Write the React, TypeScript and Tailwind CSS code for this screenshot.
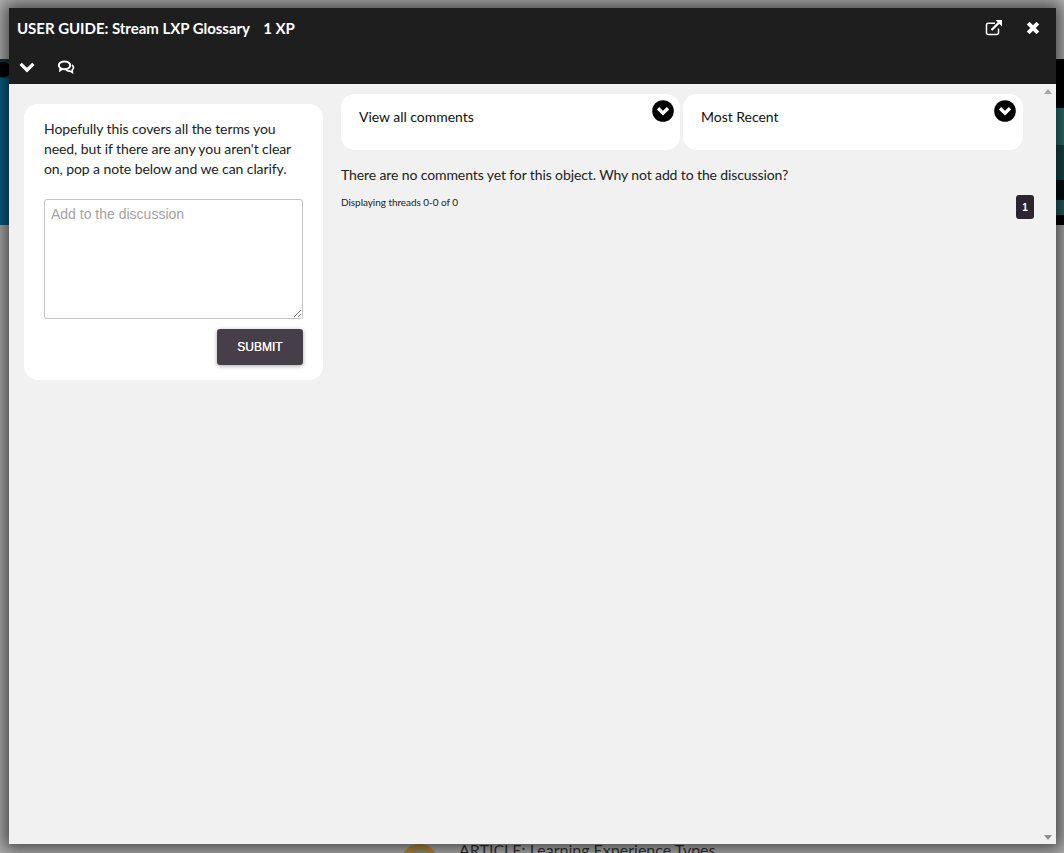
function ChevronCircle() {
  return (
    <svg viewBox="0 0 22 22" className="w-[22px] h-[22px]">
      <circle cx="11" cy="11" r="10.8" fill="#000" />
      <path d="M4.800 9.400 L7.200 7 L11 10.800 L14.800 7 L17.200 9.400 L11 15.600 Z" fill="#fff" />
    </svg>
  )
}

function SelectBox({ label, className, iconPad }: { label: string; className: string; iconPad: string }) {
  return (
    <div className={`h-14 bg-white rounded-[14px] flex justify-between ${className}`}>
      <span className="text-sm tracking-[-0.03px] text-[#111] pl-[18px] pt-[14px] leading-[18px]">{label}</span>
      <span className={`pt-1.5 ${iconPad}`}><ChevronCircle /></span>
    </div>
  )
}

export default function App() {
  return (
    <div className="relative w-full h-[853px] overflow-hidden bg-[#b0b0b0] font-['Lato',sans-serif]">
      {/* page behind the modal */}
      <div className="absolute inset-x-0 top-0 h-[59px] bg-[#b4b4b4]" />
      <div className="absolute inset-x-0 top-[59px] h-[166px] bg-[#0a5f8a] flex justify-between">
        <div className="w-[9px] h-[19px] bg-[#0c3b44] overflow-hidden">
          <div className="w-[15px] h-[15px] ml-[-4px] mt-[3px] rounded-full bg-black" />
        </div>
        <div className="w-2 h-full flex flex-col bg-black">
          <div className="h-[49px] bg-black" />
          <div className="h-[37px] bg-[#2a7373]" />
          <div className="h-[35px] bg-[#12484a]" />
          <div className="h-5 bg-[#020f10]" />
          <div className="h-[15px] bg-[#245f60]" />
        </div>
      </div>
      <div className="absolute left-[401px] top-[844px] w-[37px] h-[37px] rounded-full border-[6px] border-[#b98a3a] bg-[#7d9a96] flex justify-center" />
      <div className="absolute left-[459px] top-[840px] text-base text-[#333] leading-5">ARTICLE: Learning Experience Types</div>

      <div className="absolute left-[9px] top-2 w-[1047px] h-[836px] flex flex-col bg-[#f1f1f1] shadow-[0_0_16px_5px_rgba(0,0,0,0.6)]">
        <header className="h-[76px] bg-[#1e1e1e] shrink-0 text-white">
          <div className="flex items-center justify-between h-10 pl-2 pr-[16px]">
            <h1 className="text-[15px] font-bold tracking-[-0.03px]">USER GUIDE: Stream LXP Glossary <span className="ml-[10px]">1 XP</span></h1>
            <div className="flex items-center gap-[23px] mt-[-1px]">
              <svg viewBox="0 0 18 18" className="w-[18px] h-[18px]" fill="none" stroke="#fff">
                <path d="M13.500 9.500v4.200a1.800 1.800 0 0 1-1.800 1.800H3.300a1.800 1.800 0 0 1-1.800-1.800V6a1.800 1.800 0 0 1 1.800-1.800H10" strokeWidth="1.500" />
                <path d="M6.500 11 L14.500 3.200" strokeWidth="2.400" />
                <path d="M10.600 1H17V7.400Z" fill="#fff" stroke="none" />
              </svg>
              <svg viewBox="0 0 14 14" className="w-[14px] h-[14px]">
                <path d="M0.800 3.500 3.500 0.800 7 4.300 10.500 0.800 13.200 3.500 9.700 7 13.200 10.500 10.500 13.200 7 9.700 3.500 13.200 0.800 10.500 4.300 7Z" fill="#fff" />
              </svg>
            </div>
          </div>
          <div className="flex items-center pl-[10px] gap-[22px] mt-[7px] h-6">
            <svg viewBox="0 0 16 11" className="w-4 h-[11px]">
              <path d="M0.500 3 2.800 0.700 8 5.800 13.200 0.700 15.500 3 8 10.400Z" fill="#fff" />
            </svg>
            <svg viewBox="0 0 18 15" className="w-[18px] h-[15px]" fill="none" stroke="#fff" strokeWidth="2">
              <path d="M7.500 1.400c3.200 0 5.700 1.700 5.700 3.900s-2.500 3.900-5.700 3.900c-.8 0-1.500-.1-2.200-.3L3.200 10.200l.3-2C2.400 7.500 1.800 6.500 1.800 5.300c0-2.200 2.500-3.900 5.700-3.900Z" />
              <path d="M15 5c1 .7 1.500 1.600 1.500 2.600 0 1-.5 1.900-1.400 2.600l.3 2.300-2.300-1.500c-1.400.2-3 0-4-.8" strokeWidth="1.600" />
            </svg>
          </div>
        </header>

        <div className="relative flex-1 flex pl-[15px] pr-[22px] pt-[10px] gap-[18px]">
          <aside className="w-[299px] h-[276px] mt-[10px] bg-white rounded-[14px] px-5 pt-[15px] shrink-0">
            <p className="text-sm tracking-[-0.08px] leading-5 text-[#222]">Hopefully this covers all the terms you need, but if there are any you aren't clear on, pop a note below and we can clarify.</p>
            <textarea
              placeholder="Add to the discussion"
              className="block w-[259px] h-[120px] mt-5 border border-[#c4c4c4] rounded-[3px] px-[6px] py-1 text-sm bg-white placeholder:text-[#a3a3a3] font-['Liberation_Sans',sans-serif] resize-y"
            />
            <div className="flex justify-end mt-[10px]">
              <button className="w-[86px] h-9 bg-[#463f49] rounded-[3px] text-white text-xs font-['Liberation_Sans',sans-serif] [text-shadow:0_0_0.4px_#fff] shadow-[0_1px_4px_rgba(0,0,0,0.35)]">SUBMIT</button>
            </div>
          </aside>
          <main className="flex-1 min-w-0">
            <div className="flex gap-[3px] pr-[11px]">
              <SelectBox label="View all comments" className="flex-1" iconPad="pr-[6px]" />
              <SelectBox label="Most Recent" className="w-[340px]" iconPad="pr-[7px]" />
            </div>
            <p className="text-sm tracking-[-0.11px] leading-5 text-[#222] mt-[15px]">There are no comments yet for this object. Why not add to the discussion?</p>
            <div className="flex justify-between items-start mt-[10px]">
              <span className="text-[10px] tracking-[-0.05px] leading-[14px] text-[#222]">Displaying threads 0-0 of 0</span>
              <span className="w-[18px] h-6 bg-[#2d2630] rounded-[3px] text-white text-[10px] font-bold font-['Liberation_Sans',sans-serif] flex items-center justify-center">1</span>
            </div>
          </main>
          {/* scrollbar arrows */}
          <span className="absolute right-[4px] top-[5px] w-0 h-0 border-x-[4px] border-x-transparent border-b-[5px] border-b-[#a6a6a6]" />
          <span className="absolute right-[4px] bottom-[4px] w-0 h-0 border-x-[4px] border-x-transparent border-t-[5px] border-t-[#8e8e8e]" />
        </div>
      </div>
    </div>
  )
}
